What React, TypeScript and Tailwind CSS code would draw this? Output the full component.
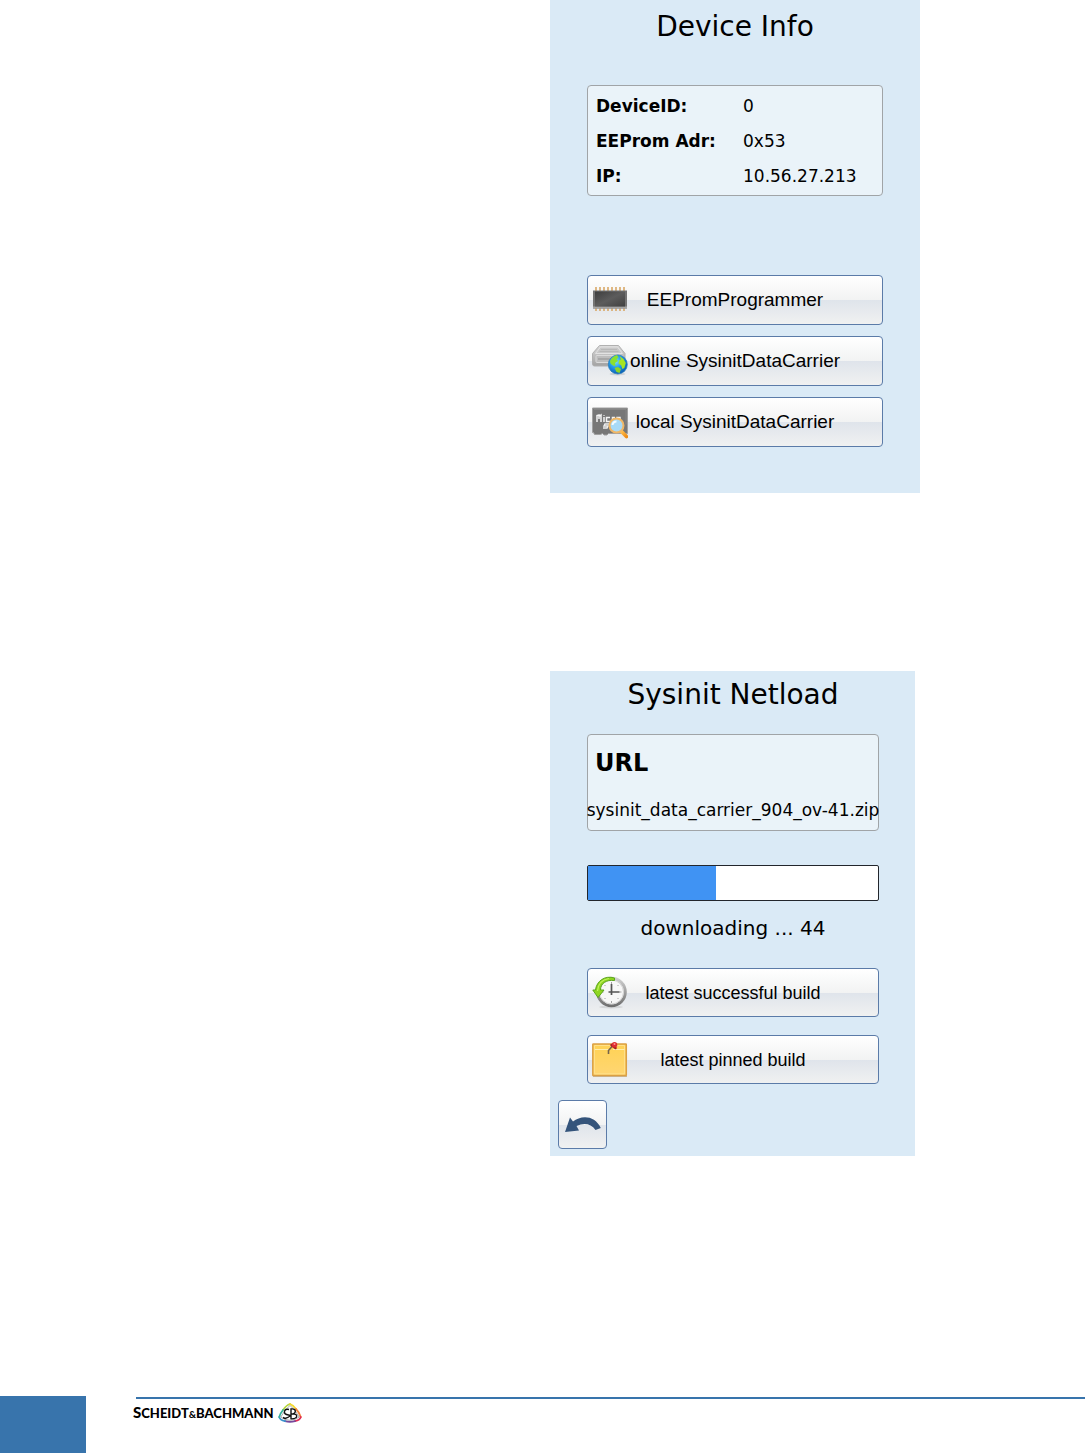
import React from 'react';

interface ActionButtonProps {
    label: string;
    icon: React.ReactNode;
    className: string;
}

const deviceInfo = [
    { name: 'DeviceID:', value: '0' },
    { name: 'EEProm Adr:', value: '0x53' },
    { name: 'IP:', value: '10.56.27.213' },
];

const ChipIcon = () => (
    <svg viewBox="0 0 36 36" className="size-9 shrink-0" aria-hidden="true">
        <defs>
            <linearGradient id="chip" x1="0" y1="0" x2="1" y2="1">
                <stop offset="0" stopColor="#3e3e3e" />
                <stop offset="0.5" stopColor="#5c5c5c" />
                <stop offset="1" stopColor="#404040" />
            </linearGradient>
        </defs>
        {[4, 8, 12, 16, 20, 24, 28, 32].map((x) => (
            <path key={x} d={`M${x} 5v24`} stroke="#d9a866" strokeWidth="1.6" />
        ))}
        <rect x="1" y="8.500" width="34" height="18" fill="#737373" />
        <rect x="1" y="24.500" width="34" height="2" fill="#a5a5a5" />
        <rect x="3" y="9.500" width="30" height="15" fill="url(#chip)" />
    </svg>
);

const DriveIcon = () => (
    <svg viewBox="0 0 36 36" className="size-9 shrink-0" aria-hidden="true">
        <defs>
            <linearGradient id="drive" x1="0" y1="0" x2="0" y2="1">
                <stop offset="0" stopColor="#d8d8d8" />
                <stop offset="1" stopColor="#a2a2a2" />
            </linearGradient>
            <radialGradient id="globe" cx="0.4" cy="0.35" r="0.65">
                <stop offset="0" stopColor="#7fe0fa" />
                <stop offset="0.5" stopColor="#249bea" />
                <stop offset="1" stopColor="#0c5fb5" />
            </radialGradient>
        </defs>
        <path d="M7.500 2.500h19l6.500 8v10.500q0 2-2 2H2.500q-2 0-2-2V10.500z" fill="url(#drive)" stroke="#b0b0b0" />
        <path d="M8.500 4h17l5 6.500h-27z" fill="#c8c8c8" stroke="#e2e2e2" />
        <path d="M9 6.500h16M7.500 8.500h19" stroke="#b8b8b8" />
        <rect x="4" y="12.500" width="26" height="7" rx="1" fill="#bdbdbd" stroke="#dadada" />
        <path d="M6 16h17" stroke="#a0a0a0" strokeWidth="1.500" />
        <ellipse cx="25.500" cy="31" rx="8" ry="1.500" fill="#cdd1d6" />
        <circle cx="25.800" cy="21.500" r="9.500" fill="url(#globe)" stroke="#2e83bd" strokeWidth="0.800" />
        <path d="M18 18q2-4.500 7-6l1.500 2.500-2 1.500 1.500 2-3 2 .5 3-2.500-.5-2.500-2z" fill="#8ce02e" />
        <path d="M27.500 13l4 3 2.300 4-1.500 5-2 1-1-3.500-2.800-2 .5-3 2-1z" fill="#a6e421" />
        <path d="M22.500 25l3.500-1 3 2-1.500 4-3-1z" fill="#8bd427" />
    </svg>
);

const CardIcon = () => (
    <svg viewBox="0 0 36 36" className="size-9 shrink-0" aria-hidden="true">
        <defs>
            <linearGradient id="handle" x1="0" y1="0" x2="1" y2="1">
                <stop offset="0" stopColor="#ffc04f" />
                <stop offset="1" stopColor="#ee8c16" />
            </linearGradient>
        </defs>
        <path d="M.5 4h35v25.500h-19l-1.500 1.500h-3l-1.500-1.500-2 1h-6l-1-2h-1z" fill="#777777" stroke="#a0a0a0" />
        <path d="M2 5.500h32v15" fill="none" stroke="#858585" />
        {/* rough strokes for the "Micro SD" print on the card */}
        <path
            d="M5 18v-6.500l2-.5v4M7.500 12l1.500-1v7M12 13v5M12 11v.8M18 13.500h-3.500v4h3.500M20.500 18v-4.500h2.500M25 13.500h3v4h-3z"
            fill="none"
            stroke="#f4f4f4"
            strokeWidth="1.500"
        />
        <path d="M17 20h-4l-1 2h4l-1 2h-4" fill="none" stroke="#eeeeee" strokeWidth="1.500" />
        <path d="M29.500 27.500l5 5" stroke="url(#handle)" strokeWidth="3.800" strokeLinecap="round" />
        <circle cx="24.500" cy="21.500" r="7" fill="#a8daf6" stroke="#f0b766" strokeWidth="2" />
        <path d="M20.500 21a4 4 0 0 1 4-3.500" stroke="#f4fcff" strokeWidth="2" fill="none" />
    </svg>
);

const HistoryIcon = () => (
    <svg viewBox="0 0 36 36" className="size-9 shrink-0" aria-hidden="true">
        <defs>
            <linearGradient id="rim" x1="0" y1="0" x2="0" y2="1">
                <stop offset="0" stopColor="#d0d0d0" />
                <stop offset="1" stopColor="#707070" />
            </linearGradient>
        </defs>
        <ellipse cx="19" cy="32" rx="12" ry="1.500" fill="#d4d6d8" />
        <circle cx="19.500" cy="17" r="13.800" fill="#f7f7f7" stroke="url(#rim)" strokeWidth="3" />
        <circle cx="19.500" cy="17" r="12" fill="none" stroke="#d2d2d2" />
        <path d="M19.500 7v2M19.500 26v2M9.500 17h2M27.500 17h2M12.500 10l1 1M26.500 10l-1 1M12.500 24l1-1M26.500 24l-1-1" stroke="#a4a4a4" />
        <path d="M19.500 9v11M16.500 17h11" stroke="#555555" strokeWidth="1.700" />
        <path
            d="M22.500 3C13 0 4.500 6 3.500 15H.8l5.200 7.500L12 15H8.500C8.500 8.500 14 4.500 22.500 5.500z"
            fill="#8fd621"
            stroke="#5aa51c"
            strokeLinejoin="round"
        />
        <path d="M17 3.500C10.500 4.500 6 9 5.500 16" fill="none" stroke="#c2f35f" strokeWidth="1.200" />
    </svg>
);

const NoteIcon = () => (
    <svg viewBox="0 0 36 36" className="size-9 shrink-0" aria-hidden="true">
        <defs>
            <linearGradient id="note" x1="0" y1="0" x2="0" y2="1">
                <stop offset="0" stopColor="#ffd254" />
                <stop offset="1" stopColor="#ffd673" />
            </linearGradient>
        </defs>
        <path d="M1 34.500h34" stroke="#c7b79b" />
        <rect x="0.800" y="2" width="33.500" height="31.500" rx="0.500" fill="url(#note)" stroke="#dba044" strokeWidth="1.500" />
        <path d="M2.500 31.800V3.500h30v28.300z" fill="none" stroke="#ffe08a" />
        <path d="M3 7.500h14M21 7.500h11.500" stroke="#ffedac" />
        <path d="M16.500 12V8.500L20.500 4" stroke="#77644b" strokeWidth="1.600" fill="none" />
        <path d="M19.500 3l4 3" stroke="#a11e22" strokeWidth="2.500" strokeLinecap="round" />
        <circle cx="22.500" cy="2.800" r="2.800" fill="#dc2c31" />
        <circle cx="22.500" cy="2" r="1" fill="#ff8e8e" />
    </svg>
);

const BackIcon = () => (
    <svg viewBox="0 0 36 36" className="size-9" aria-hidden="true">
        <path
            d="M0 25L5 10.500l3 4C16 8 30 8 35.800 21l-5.300 2C26 16.500 19 15.500 11.500 19L14 23.500z"
            fill="#34547b"
        />
    </svg>
);

const CompanyMark = () => (
    <svg viewBox="0 0 24 20" className="h-5 w-6" aria-hidden="true">
        <g fill="none" strokeWidth="1.800" strokeLinecap="round">
            <path d="M5 7Q8.500 2 12 1" stroke="#b4d43a" />
            <path d="M12 1Q15 2 18 6" stroke="#f5d92d" />
            <path d="M18 6Q21 9 22.800 14" stroke="#f0823c" />
            <path d="M22.800 14Q22 17 17 18.200" stroke="#e02b55" />
            <path d="M17 18.200Q12 19.500 7 18.200" stroke="#75489c" />
            <path d="M7 18.200Q2 17 1.200 14" stroke="#3a91cc" />
            <path d="M1.200 14Q2.500 10 5 7" stroke="#35b19b" />
        </g>
        <path d="M12 2.500Q17 6 21.200 14 17 17.300 12 17.300T2.800 14Q7 6 12 2.500z" fill="#ffffff" stroke="#555555" strokeWidth="0.500" />
        <path
            d="M11 6.500Q7 5.500 6.500 8.500T10.500 12 7 15.500L5 14.500M13 16V6Q17.500 5.500 17.300 8.200T13.500 11Q19 10.500 18.700 13.300T12.500 15.800"
            fill="none"
            stroke="#111111"
            strokeWidth="1.400"
        />
    </svg>
);

const buttonLook =
    'rounded border border-[#5b7ba8] bg-[linear-gradient(#ffffff_0%,#f2f3f3_50%,#dfe4eb_50%,#f0f1f1_100%)]';

const ActionButton = ({ label, icon, className }: ActionButtonProps) => (
    <button type="button" className={`flex w-full items-center px-1 ${buttonLook} ${className}`}>
        {icon}
        <span className="flex-1 whitespace-nowrap pr-9 text-center">{label}</span>
    </button>
);

const DeviceInfoPanel = () => (
    <section className="w-full max-w-[370px] bg-[#daeaf6] px-[37px] pt-2 pb-[46px]">
        <h1 className="text-center text-[28px] leading-[38px]">Device Info</h1>
        <div className="mt-[39px] rounded border border-[#a0a4a7] bg-[#eaf3f9] pt-[3px] pb-px">
            <table className="w-full text-left text-[17px] leading-[35px]">
                <tbody>
                    {deviceInfo.map((row) => (
                        <tr key={row.name}>
                            <th scope="row" className="w-[155px] pl-2 font-bold">{row.name}</th>
                            <td>{row.value}</td>
                        </tr>
                    ))}
                </tbody>
            </table>
        </div>
        <div className="mt-[79px] flex flex-col gap-[11px] font-['Liberation_Sans',sans-serif] text-[19px]">
            <ActionButton label="EEPromProgrammer" icon={<ChipIcon />} className="h-[50px]" />
            <ActionButton label="online SysinitDataCarrier" icon={<DriveIcon />} className="h-[50px]" />
            <ActionButton label="local SysinitDataCarrier" icon={<CardIcon />} className="h-[50px]" />
        </div>
    </section>
);

const NetloadPanel = () => {
    const progress = 44;

    return (
        <section className="mt-[178px] w-full max-w-[365px] bg-[#daeaf6] pt-[5px] pb-[7px]">
            <div className="pr-9 pl-[37px]">
                <h1 className="text-center text-[28px] leading-[38px]">Sysinit Netload</h1>
                <div className="mt-5 rounded border border-[#a0a4a7] bg-[#eaf3f9] pt-3 pb-2">
                    <h2 className="pl-[7px] text-2xl leading-8 font-bold">URL</h2>
                    <p className="mt-[19px] flex justify-center text-[17px] leading-6 whitespace-nowrap">
                        sysinit_data_carrier_904_ov-41.zip
                    </p>
                </div>
                <div
                    role="progressbar"
                    aria-label="Download"
                    aria-valuenow={progress}
                    className="mt-[34px] h-9 rounded-xs border border-[#22262c] bg-white"
                >
                    <div className="h-full bg-[#4093f3]" style={{ width: `${progress}%` }}></div>
                </div>
                <p className="mt-3 text-center text-xl leading-[30px]">downloading ... {progress}</p>
                <div className="mt-[25px] flex flex-col gap-[18px] font-['Liberation_Sans',sans-serif] text-lg">
                    <ActionButton label="latest successful build" icon={<HistoryIcon />} className="h-[49px]" />
                    <ActionButton label="latest pinned build" icon={<NoteIcon />} className="h-[49px]" />
                </div>
            </div>
            <button
                type="button"
                aria-label="Back"
                className={`mt-4 ml-2 flex size-[49px] items-center justify-center ${buttonLook}`}
            >
                <BackIcon />
            </button>
        </section>
    );
};

const Footer = () => (
    <footer className="mt-auto flex h-[57px] pr-1">
        <div className="w-[86px] shrink-0 bg-[#3874ac]"></div>
        <div className="ml-[47px] flex-1 pt-px">
            <div className="ml-[3px] h-[2px] bg-[#3874ac]"></div>
            <div className="mt-[3px] flex items-center gap-1">
                <span className="font-['Lato',sans-serif] text-[13px] leading-5 font-black">
                    <span className="text-[15px]">S</span>CHEIDT<span className="text-[10px]">&amp;</span>BACHMANN
                </span>
                <CompanyMark />
            </div>
        </div>
    </footer>
);

const App = () => (
    <div className="flex min-h-screen flex-col bg-white font-['DejaVu_Sans',sans-serif] text-black">
        <main className="pl-[550px]">
            <DeviceInfoPanel />
            <NetloadPanel />
        </main>
        <Footer />
    </div>
);

export default App;
